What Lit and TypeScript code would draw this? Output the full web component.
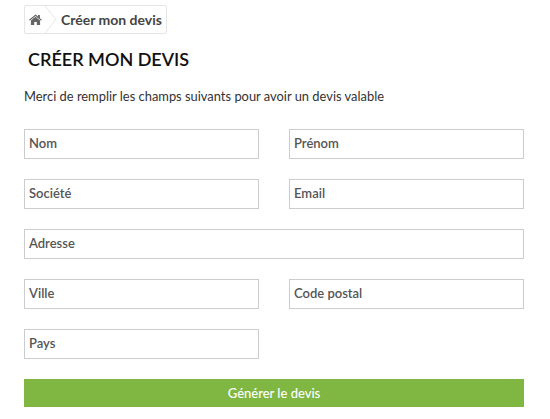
import { LitElement, html, css } from "lit";
import { customElement } from "lit/decorators.js";

@customElement("app-root")
export class AppRoot extends LitElement {
  static styles = css`
    :host { display: block; font-family: Lato, sans-serif; color: #333; background: #fff; height: 419px; overflow: hidden; box-sizing: border-box; padding: 5px 26px 0 24px; }
    * { box-sizing: border-box; }
    .crumb { display: flex; width: 143px; align-items: center; height: 29px; border: 1px solid #e5e5e5; border-radius: 2px; }
    .home { width: 13px; margin-left: 4px; display: flex; align-items: center; justify-content: center; }
    .sep { width: 14px; height: 27px; flex: none; margin-left: 3px; }
    .cur { font-size: 14px; font-weight: 700; color: #444; padding: 0 0 1px 2px; white-space: nowrap; }
    h1 { margin: 0; font-size: 18px; line-height: 24px; font-weight: 600; color: #111; padding: 13px 0 0 4px; }
    p { margin: 0; font-size: 12.9px; line-height: 20px; padding-top: 15px; color: #333; }
    form { display: grid; grid-template-columns: 235px 235px; column-gap: 30px; row-gap: 20px; margin-top: 23px; }
    .f { height: 30px; border: 1px solid #ccc; font-size: 13px; font-weight: 600; color: #555; padding: 0 4px 2px; display: flex; align-items: center; background: #fff; }
    .wide { grid-column: 1 / -1; }
    button { grid-column: 1 / -1; height: 28px; border: 0; background: #80b742; color: #fff; font: 500 13px Lato, sans-serif; padding: 0; }
  `;

  render() {
    return html`
      <nav class="crumb">
        <span class="home">
          <svg width="13" height="11" viewBox="0 0 14 12">
            <path fill="#666" d="M7 .6 0 6.4l.7.9L7 2.1l6.3 5.2.7-.9-2.2-1.9V1h-2v1.6L7 .6Z"/>
            <path fill="#666" d="M7 3.1 2 7.2V12h3.6V8.6h2.8V12H12V7.2L7 3.1Z"/>
          </svg>
        </span>
        <svg class="sep" viewBox="0 0 14 27"><path d="M0 0 L11 13.5 L0 27" fill="none" stroke="#e5e5e5"/></svg>
        <span class="cur">Créer mon devis</span>
      </nav>
      <h1>CRÉER MON DEVIS</h1>
      <p>Merci de remplir les champs suivants pour avoir un devis valable</p>
      <form>
        <div class="f">Nom</div>
        <div class="f">Prénom</div>
        <div class="f">Société</div>
        <div class="f">Email</div>
        <div class="f wide">Adresse</div>
        <div class="f">Ville</div>
        <div class="f">Code postal</div>
        <div class="f">Pays</div>
        <div></div>
        <button type="button">Générer le devis</button>
      </form>
    `;
  }
}
